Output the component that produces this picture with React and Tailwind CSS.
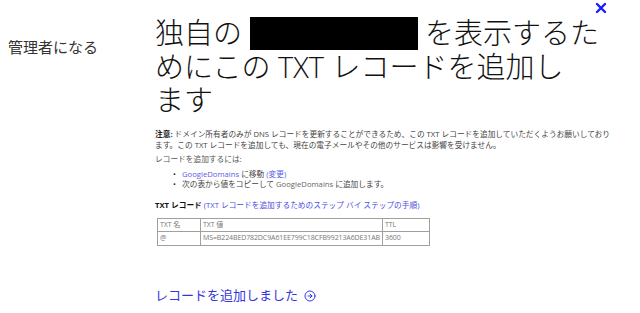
import { CircleArrowRight } from "lucide-react";

const jp = { fontFamily: '"Open Sans", "Noto Sans CJK JP", sans-serif' };

export default function App() {
  return (
    <div className="relative w-[640px] h-[313px] bg-white overflow-hidden text-[#333]" style={jp}>
      {/* close */}
      <button className="absolute left-[595px] top-[2px] w-[12px] h-[12px]">
        <svg width="12" height="12" viewBox="0 0 12 12" fill="none" stroke="#1a1aff" strokeWidth="2.4" strokeLinecap="round">
          <path d="M2 2l8 8M10 2l-8 8" />
        </svg>
      </button>

      <div className="flex">
        {/* sidebar */}
        <div className="w-[155px] shrink-0 pt-[37px] pl-[8px]">
          <div className="text-[15px] leading-[20px] text-[#333]">管理者になる</div>
        </div>

        {/* main */}
        <div className="w-[456px] shrink-0">
          <h1 className="pt-[16px] text-[29px] leading-[33px] font-light text-[#111]">
            独自の <span className="inline-block w-[168px] h-[33px] bg-black align-[-6px]" /> を表示するた
            <br />
            めにこの TXT レコードを追加し
            <br />
            ます
          </h1>

          <p className="mt-[13px] text-[7.7px] leading-[11px] text-[#444]">
            <b className="font-bold text-[#222]">注意:</b> ドメイン所有者のみが DNS レコードを更新することができるため、この TXT レコードを追加していただくようお願いしております。この TXT レコードを追加しても、現在の電子メールやその他のサービスは影響を受けません。
          </p>
          <p className="mt-[3px] text-[7.7px] leading-[11px] text-[#555]">レコードを追加するには:</p>

          <ul className="mt-[4px] text-[7.7px] leading-[10px] text-[#444]">
            <li className="flex">
              <span className="w-[27px] pl-[18px] text-[#222]">•</span>
              <span>
                <span className="text-[#5b5be6]">GoogleDomains</span> に移動 <span className="text-[#5b5be6]">(変更)</span>
              </span>
            </li>
            <li className="flex">
              <span className="w-[27px] pl-[18px] text-[#222]">•</span>
              <span>次の表から値をコピーして <span className="text-[#666]">GoogleDomains</span> に追加します。</span>
            </li>
          </ul>

          <div className="mt-[11px] text-[7.7px] leading-[11px]">
            <b className="font-bold text-[#111]">TXT レコード</b>{" "}
            <span className="text-[#4b4be0]">(TXT レコードを追加するためのステップ バイ ステップの手順)</span>
          </div>

          <table className="mt-[7px] ml-[2px] border-collapse text-[7px] tracking-[-0.1px] text-[#777]">
            <tbody>
              <tr className="h-[13px]">
                <td className="border border-[#a0a0a0] w-[43px] px-[2px]">TXT 名</td>
                <td className="border border-[#a0a0a0] w-[182px] px-[2px]">TXT 値</td>
                <td className="border border-[#a0a0a0] w-[47px] px-[2px]">TTL</td>
              </tr>
              <tr className="h-[14px]">
                <td className="border border-[#a0a0a0] px-[2px]">@</td>
                <td className="border border-[#a0a0a0] px-[2px] whitespace-nowrap">MS=B224BED782DC9A61EE799C18CFB99213A6DE31AB</td>
                <td className="border border-[#a0a0a0] px-[2px]">3600</td>
              </tr>
            </tbody>
          </table>

          <a className="mt-[42px] flex items-center gap-[6px] text-[13px] leading-[15px] text-[#3535e0]">
            レコードを追加しました
            <CircleArrowRight size={12} strokeWidth={2} />
          </a>
        </div>
      </div>
    </div>
  );
}
